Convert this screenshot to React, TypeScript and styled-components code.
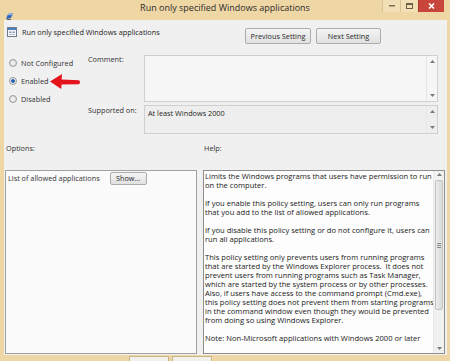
import styled, { createGlobalStyle } from "styled-components";

const GlobalStyle = createGlobalStyle`
	html, body {
		margin: 0;
		padding: 0;
		background: #efd7a5;
	}
	body {
		font-family: "Open Sans", "Noto Sans", sans-serif;
		color: #1e1e1e;
	}
`;

const helpParagraphs: string[][] = [
	["Limits the Windows programs that users have permission to run", "on the computer."],
	["If you enable this policy setting, users can only run programs", "that you add to the list of allowed applications."],
	["If you disable this policy setting or do not configure it, users can", "run all applications."],
	[
		"This policy setting only prevents users from running programs",
		"that are started by the Windows Explorer process.  It does not",
		"prevent users from running programs such as Task Manager,",
		"which are started by the system process or by other processes.",
		"Also, if users have access to the command prompt (Cmd.exe),",
		"this policy setting does not prevent them from starting programs",
		"in the command window even though they would be prevented",
		"from doing so using Windows Explorer.",
	],
	["Note: Non-Microsoft applications with Windows 2000 or later"],
];

const radios = [
	{ label: "Not Configured", checked: false },
	{ label: "Enabled", checked: true },
	{ label: "Disabled", checked: false },
];

const Arrow = ({ dir }: { dir: "up" | "down" }) => (
	<svg width="5" height="3" viewBox="0 0 5 3">
		{dir === "up" ? <path d="M0 3 L2.5 0 L5 3 Z" fill="#7a7a7a" /> : <path d="M0 0 L2.5 3 L5 0 Z" fill="#7a7a7a" />}
	</svg>
);

const App: React.FC = () => {
	return (
		<Window>
			<GlobalStyle />
			<TitleBar>
				<TitleIcon>
					<svg width="9" height="9" viewBox="0 0 9 9">
						<path d="M1 7 L3 2 L8 1 L6 6 Z" fill="#2f62b8" />
						<path d="M3 2 L8 1 L7 3 L3.5 3.5 Z" fill="#8fb4ea" />
						<rect x="2" y="7" width="4" height="1.5" fill="#5b5b5b" />
					</svg>
				</TitleIcon>
				<TitleText>Run only specified Windows applications</TitleText>
				<Controls>
					<CtrlButton>
						<svg width="6" height="2" viewBox="0 0 6 2">
							<rect width="6" height="1.5" fill="#7b6d55" />
						</svg>
					</CtrlButton>
					<CtrlButton>
						<svg width="7" height="6" viewBox="0 0 7 6">
							<rect x="0.5" y="0.5" width="6" height="5" fill="none" stroke="#6b5f4c" />
							<rect x="0.5" y="0.5" width="6" height="1.5" fill="#6b5f4c" />
						</svg>
					</CtrlButton>
					<CloseButton>
						<svg width="7" height="6" viewBox="0 0 7 6">
							<path d="M1 0.5 L6 5.5 M6 0.5 L1 5.5" stroke="#fff" strokeWidth="1.6" />
						</svg>
					</CloseButton>
				</Controls>
			</TitleBar>

			<Body>
				<Header>
					<PolicyName>
						<svg width="10" height="10" viewBox="0 0 10 10">
							<rect x="0.5" y="0.5" width="9" height="9" fill="#f4f6f9" stroke="#6f7c8e" />
							<rect x="1" y="1" width="8" height="2" fill="#4f7fc0" />
							<rect x="2" y="4.5" width="2.5" height="1.5" fill="#8aa0bf" />
							<rect x="5.5" y="4.5" width="2.5" height="1.5" fill="#8aa0bf" />
							<rect x="2" y="7" width="6" height="1" fill="#b8c4d4" />
						</svg>
						<span>Run only specified Windows applications</span>
					</PolicyName>
					<NavButtons>
						<PushButton $width={66}>Previous Setting</PushButton>
						<PushButton $width={65}>Next Setting</PushButton>
					</NavButtons>
				</Header>

				<StateGrid>
					<RadioColumn>
						{radios.map((r) => (
							<RadioRow key={r.label}>
								<RadioDot $checked={r.checked} />
								<span>{r.label}</span>
							</RadioRow>
						))}
						<RedArrow width="33" height="17" viewBox="0 0 33 17">
							<path
								d="M1 8.5 L13 1 L12.6 6.4 L30 7.2 Q32 9 30 11.2 L12.6 11.4 L12.2 16 Z"
								fill="#e5131b"
							/>
						</RedArrow>
					</RadioColumn>
					<FieldLabel>Comment:</FieldLabel>
					<FieldBox $height={47} $bg="#f6f6f6">
						<span />
						<MiniScroll>
							<Arrow dir="up" />
							<Arrow dir="down" />
						</MiniScroll>
					</FieldBox>
					<FieldLabel $offset={1}>Supported on:</FieldLabel>
					<FieldBox $height={29} $bg="#eeeeee">
						<BoxText>At least Windows 2000</BoxText>
						<MiniScroll>
							<Arrow dir="up" />
							<Arrow dir="down" />
						</MiniScroll>
					</FieldBox>
				</StateGrid>

				<Lower>
					<SectionLabel>Options:</SectionLabel>
					<SectionLabel>Help:</SectionLabel>
					<Panel>
						<OptionRow>
							<span>List of allowed applications</span>
							<PushButton $width={37} $small>
								Show...
							</PushButton>
						</OptionRow>
					</Panel>
					<Panel $help>
						<HelpText>
							{helpParagraphs.map((p, i) => (
								<HelpPara key={i}>
									{p.map((line, j) => (
										<div key={j}>{line}</div>
									))}
								</HelpPara>
							))}
						</HelpText>
						<ScrollTrack>
							<Arrow dir="up" />
							<Thumb>
								<Grip />
							</Thumb>
							<Arrow dir="down" />
						</ScrollTrack>
					</Panel>
				</Lower>
			</Body>

			<BottomStrip>
				<StubButton />
				<StubButton />
			</BottomStrip>
		</Window>
	);
};

export default App;

const Window = styled.div`
	width: 450px;
	height: 361px;
	overflow: hidden;
	display: flex;
	flex-direction: column;
	background: #efd7a5;
`;

const TitleBar = styled.div`
	height: 20px;
	flex: none;
	display: grid;
	grid-template-columns: 1fr auto 1fr;
	align-items: start;
`;

const TitleIcon = styled.div`
	padding: 4px 0 0 5px;
`;

const TitleText = styled.div`
	padding-top: 2px;
	font-size: 9px;
	line-height: 12px;
	color: #2b2b2b;
`;

const Controls = styled.div`
	justify-self: end;
	display: flex;
	margin-right: 6px;
`;

const CtrlButton = styled.div`
	width: 18px;
	height: 12px;
	display: flex;
	align-items: center;
	justify-content: center;
	background: #f3dfb6;
	border-left: 1px solid #d9c193;
	box-sizing: border-box;
`;

const CloseButton = styled(CtrlButton)`
	width: 26px;
	background: #c8453c;
	border-left: 1px solid #a8362e;
`;

const Body = styled.div`
	flex: 1;
	margin: 0 3px 0 4px;
	background: #f0f0f0;
	display: flex;
	flex-direction: column;
	font-size: 7.3px;
	line-height: 9px;
`;

const Header = styled.div`
	display: flex;
	align-items: flex-start;
	margin-top: 7px;
	height: 17px;
`;

const PolicyName = styled.div`
	display: flex;
	align-items: center;
	gap: 5px;
	padding-left: 3px;
	width: 238px;
`;

const NavButtons = styled.div`
	display: flex;
	gap: 5px;
	margin-top: 1px;
`;

const PushButton = styled.div<{ $width: number; $small?: boolean }>`
	width: ${(p) => p.$width}px;
	height: ${(p) => (p.$small ? 13 : 16)}px;
	box-sizing: border-box;
	border: 1px solid #acacac;
	border-radius: 2px;
	background: linear-gradient(#f4f4f4, #e1e1e1);
	display: flex;
	align-items: center;
	justify-content: center;
	color: #2a2a2a;
	white-space: nowrap;
`;

const StateGrid = styled.div`
	display: grid;
	grid-template-columns: 84px 56px 294px;
	grid-template-rows: 47px 29px;
	row-gap: 3px;
	margin-top: 11px;
`;

const RadioColumn = styled.div`
	grid-row: 1 / 3;
	position: relative;
	padding-left: 5px;
	margin-top: -1px;
	color: #333;
`;

const RadioRow = styled.div`
	display: flex;
	align-items: center;
	gap: 4px;
	height: 18px;
`;

const RadioDot = styled.span<{ $checked: boolean }>`
	width: 8px;
	height: 8px;
	box-sizing: border-box;
	border-radius: 50%;
	border: 1px solid #9a9a9a;
	background: ${(p) =>
		p.$checked
			? "radial-gradient(circle, #1f4f8f 0, #3c74bf 1.6px, #e9e9e9 2.2px)"
			: "radial-gradient(circle, #f2f2f2, #dcdcdc)"};
`;

const RedArrow = styled.svg`
	position: absolute;
	left: 45px;
	top: 19px;
`;

const FieldLabel = styled.div<{ $offset?: number }>`
	padding-top: ${(p) => p.$offset ?? 0}px;
	color: #333;
`;

const FieldBox = styled.div<{ $height: number; $bg: string }>`
	height: ${(p) => p.$height}px;
	box-sizing: border-box;
	border: 1px solid #d0d0d0;
	background: ${(p) => p.$bg};
	display: flex;
	justify-content: space-between;
`;

const BoxText = styled.span`
	padding: 3px 0 0 3px;
`;

const MiniScroll = styled.div`
	width: 10px;
	display: flex;
	flex-direction: column;
	justify-content: space-between;
	align-items: center;
	padding: 4px 0;
	border-left: 1px solid #e6e6e6;
`;

const Lower = styled.div`
	flex: 1;
	display: grid;
	grid-template-columns: 192px 242px;
	grid-template-rows: 9px 1fr;
	column-gap: 6px;
	row-gap: 17px;
	padding: 10px 2px 1px 1px;
`;

const SectionLabel = styled.div`
	padding-left: 1px;
	color: #333;
`;

const Panel = styled.div<{ $help?: boolean }>`
	box-sizing: border-box;
	border: 1px solid ${(p) => (p.$help ? "#8e8e8e" : "#a0a0a0")};
	background: ${(p) => (p.$help ? "#fdfdfd" : "#fafafa")};
	display: flex;
	overflow: hidden;
`;

const OptionRow = styled.div`
	display: flex;
	align-items: center;
	gap: 10px;
	padding: 1px 0 0 2px;
	height: 13px;
	color: #333;
`;

const HelpText = styled.div`
	flex: 1;
	min-width: 0;
	overflow: hidden;
	padding: 1px 0 0 1px;
	font-size: 7.6px;
	white-space: pre;
	color: #1a1a1a;
`;

const HelpPara = styled.div`
	margin-bottom: 9px;
`;

const ScrollTrack = styled.div`
	width: 11px;
	flex: none;
	display: flex;
	flex-direction: column;
	align-items: center;
	padding: 2px 0 3px;
	background: #f1f1f1;
	border-left: 1px solid #e8e8e8;
	box-sizing: border-box;
`;

const Thumb = styled.div`
	width: 8px;
	height: 130px;
	margin: 4px 0 auto;
	box-sizing: border-box;
	border: 1px solid #c2c2c2;
	border-radius: 2px;
	background: linear-gradient(90deg, #ececec, #dadada);
	display: flex;
	align-items: center;
	justify-content: center;
`;

const Grip = styled.div`
	width: 4px;
	height: 5px;
	background: repeating-linear-gradient(#8a8a8a 0 1px, transparent 1px 2px);
`;

const BottomStrip = styled.div`
	height: 5px;
	flex: none;
	display: flex;
	gap: 3px;
	padding-left: 129px;
	padding-top: 1px;
`;

const StubButton = styled.div`
	width: 38px;
	background: #f2f0ea;
	border: 1px solid #c9b58c;
	border-bottom: none;
`;
